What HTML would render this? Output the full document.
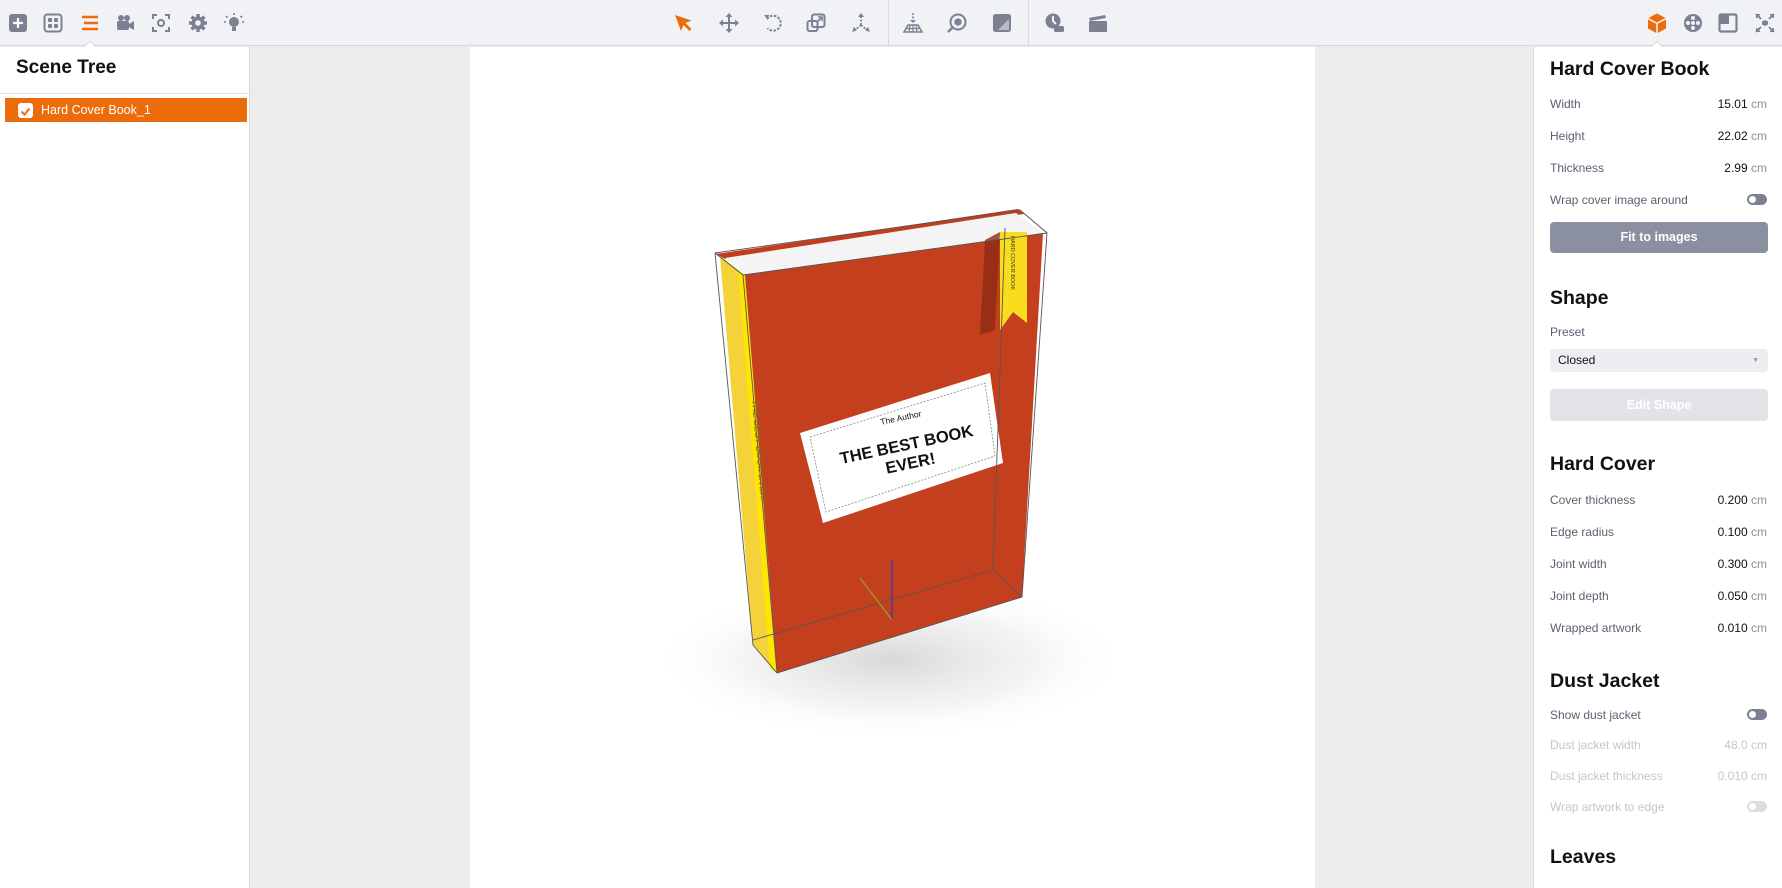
<!DOCTYPE html>
<html><head><meta charset="utf-8">
<style>
*{margin:0;padding:0;box-sizing:border-box}
body{width:1782px;height:888px;overflow:hidden;font-family:"Liberation Sans",sans-serif;background:#ececec;position:relative}
#tb{position:absolute;left:0;top:0;width:1782px;height:46px;background:#f1f2f5;border-bottom:1px solid #d6d8dc}
.ic{position:absolute;top:13px;width:20px;height:20px}
.sep{position:absolute;top:0;width:1px;height:46px;background:#d9dbdf}
#left{position:absolute;left:0;top:47px;width:250px;height:841px;background:#fff;border-right:1px solid #d9d9d9}
#left h2{position:absolute;left:16px;top:10px;font-size:19px;font-weight:bold;color:#111}
#left .div{position:absolute;left:0;top:46px;width:250px;height:1px;background:#e2e2e2}
#row{position:absolute;left:5px;top:51px;width:242px;height:24px;background:#ec6c0c;color:#fff;font-size:12.5px;line-height:24px;padding-left:36px}
#row .cb{position:absolute;left:13px;top:5px;width:15px;height:15px;background:#fff;border-radius:3px}
#view{position:absolute;left:470px;top:47px;width:845px;height:841px;background:#fff}
#right{position:absolute;left:1533px;top:47px;width:249px;height:841px;background:#fff;border-left:1px solid #d9d9d9}
.t{position:absolute;left:16px;font-size:19.5px;font-weight:bold;color:#111}
.l{position:absolute;left:16px;font-size:12px;color:#5b6170}
.v{position:absolute;right:15px;font-size:12px;color:#111}
.v span{color:#8a8f99}
.dis{color:#c4c6cc!important}
.dis span{color:#c4c6cc}
.tg{position:absolute;right:15px;width:20px;height:11px;border-radius:6px;background:#7b8192}
.tg::after{content:"";position:absolute;left:2px;top:2px;width:7px;height:7px;border-radius:50%;background:#fff}
.btn{position:absolute;left:16px;width:218px;border-radius:4px;text-align:center;color:#fff;font-weight:bold;font-size:12.5px}
</style></head><body>
<div id="tb">
<svg class="ic" style="left:8px" viewBox="0 0 20 20"><rect x="1" y="1" width="18" height="18" rx="3" fill="#7b8192"/><path d="M10 5v10M5 10h10" stroke="#fff" stroke-width="2.2"/></svg>
<svg class="ic" style="left:43px" viewBox="0 0 20 20"><rect x="1.5" y="1.5" width="17" height="17" rx="3" fill="none" stroke="#7b8192" stroke-width="2"/><rect x="5" y="5" width="4" height="4" rx="1" fill="#7b8192"/><rect x="11" y="5" width="4" height="4" rx="1" fill="#7b8192"/><rect x="5" y="11" width="4" height="4" rx="1" fill="#7b8192"/><rect x="11" y="11" width="4" height="4" rx="1" fill="#7b8192"/></svg>
<svg class="ic" style="left:80px" viewBox="0 0 20 20"><path d="M2 4h16M4 10h14M2 16h16" stroke="#ec6c0c" stroke-width="2.6"/></svg>
<svg style="position:absolute;left:84px;top:41px" width="12" height="6"><path d="M0 6L6 0L12 6" fill="#fff" stroke="#d6d8dc"/></svg>
<svg class="ic" style="left:115px" viewBox="0 0 20 20"><circle cx="6" cy="5" r="3" fill="#7b8192"/><circle cx="12" cy="5" r="3" fill="#7b8192"/><rect x="2" y="8" width="12" height="9" rx="2" fill="#7b8192"/><path d="M14 11l5-3v9l-5-3z" fill="#7b8192"/></svg>
<svg class="ic" style="left:151px" viewBox="0 0 20 20"><path d="M2 6V2h4M14 2h4v4M18 14v4h-4M6 18H2v-4" fill="none" stroke="#7b8192" stroke-width="2"/><circle cx="10" cy="10" r="3" fill="none" stroke="#7b8192" stroke-width="2"/></svg>
<svg class="ic" style="left:188px" viewBox="0 0 20 20"><circle cx="10" cy="10" r="6.5" fill="#7b8192"/><path d="M10 1v18M1 10h18M3.6 3.6l12.8 12.8M16.4 3.6L3.6 16.4" stroke="#7b8192" stroke-width="3.5"/><circle cx="10" cy="10" r="2.8" fill="#f1f2f5"/></svg>
<svg class="ic" style="left:224px" viewBox="0 0 20 20"><circle cx="10" cy="9" r="5" fill="#7b8192"/><rect x="8" y="14" width="4" height="4" fill="#7b8192"/><path d="M10 0v2M2 3l1.5 1.5M18 3l-1.5 1.5M0 9h2M18 9h2" stroke="#7b8192" stroke-width="1.6"/></svg>

<svg class="ic" style="left:673px" viewBox="0 0 20 20"><path d="M2 2l6 16 2.5-6 6 6 2-2-6-6 6-2.5z" fill="#ec6c0c"/></svg>
<svg class="ic" style="left:719px" viewBox="0 0 20 20"><path d="M10 1v18M1 10h18" stroke="#7b8192" stroke-width="2"/><path d="M10 0l-3.5 4h7zM10 20l-3.5-4h7zM0 10l4-3.5v7zM20 10l-4-3.5v7z" fill="#7b8192"/></svg>
<svg class="ic" style="left:763px" viewBox="0 0 20 20"><path d="M4 6A7.5 7.5 0 1 1 4.5 15" fill="none" stroke="#7b8192" stroke-width="2" stroke-dasharray="2.5 1.5"/><path d="M1 2l5 0-1 5z" fill="#7b8192"/></svg>
<svg class="ic" style="left:806px" viewBox="0 0 20 20"><rect x="1.5" y="8" width="10" height="10" rx="2" fill="none" stroke="#7b8192" stroke-width="2"/><rect x="6" y="1.5" width="12.5" height="12.5" rx="2" fill="none" stroke="#7b8192" stroke-width="2"/><path d="M11 9l5-5M12 4h4v4" stroke="#7b8192" stroke-width="1.6" fill="none"/></svg>
<svg class="ic" style="left:851px" viewBox="0 0 20 20"><path d="M10 3v9M10 12l-7 6M10 12l7 6" stroke="#7b8192" stroke-width="1.8" stroke-dasharray="2 1.5"/><path d="M10 0l-3 4h6zM1 19l2-5 3 3zM19 19l-2-5-3 3z" fill="#7b8192"/></svg>
<div class="sep" style="left:888px"></div>
<svg class="ic" style="left:903px" viewBox="0 0 20 20"><path d="M10 0v8" stroke="#7b8192" stroke-width="1.6" stroke-dasharray="2 1.5"/><path d="M7 7h6l-3 3z" fill="#7b8192"/><path d="M5 12h10l4 7H1z" fill="none" stroke="#7b8192" stroke-width="1.6"/><path d="M3 15.5h14M7 12l-1 7M13 12l1 7M10 12v7" stroke="#7b8192" stroke-width="1.2"/></svg>
<svg class="ic" style="left:947px" viewBox="0 0 20 20"><circle cx="11" cy="9" r="7.5" fill="none" stroke="#7b8192" stroke-width="2"/><path d="M5.5 14.5L1 19" stroke="#7b8192" stroke-width="2.4"/><path d="M11 5l3.5 2v4L11 13l-3.5-2V7z" fill="#7b8192"/></svg>
<svg class="ic" style="left:992px" viewBox="0 0 20 20"><rect x="1" y="1" width="18" height="18" rx="2.5" fill="#7b8192"/><path d="M6 17L17 6v11z" fill="#b8bcc6"/></svg>
<div class="sep" style="left:1028px"></div>
<svg class="ic" style="left:1045px" viewBox="0 0 20 20"><circle cx="8" cy="8" r="7.5" fill="#7b8192"/><path d="M8 3v5l3 3" stroke="#fff" stroke-width="1.8" fill="none"/><rect x="9" y="13" width="10" height="6" rx="1.5" fill="#7b8192"/></svg>
<svg class="ic" style="left:1088px" viewBox="0 0 20 20"><path d="M1 5l16-3 1 3-16 3z" fill="#7b8192"/><rect x="1" y="8" width="18" height="11" rx="1" fill="#7b8192"/></svg>

<svg class="ic" style="left:1647px" viewBox="0 0 20 20"><path d="M10 0.5l8.5 4.5L10 9.5 1.5 5z" fill="#ec6c0c"/><path d="M1 6.5l8.2 4.3V20L1 15.5z M19 6.5l-8.2 4.3V20l8.2-4.5z" fill="#ec6c0c"/></svg>
<svg style="position:absolute;left:1651px;top:41px" width="12" height="6"><path d="M0 6L6 0L12 6" fill="#fff" stroke="#d6d8dc"/></svg>
<svg class="ic" style="left:1683px" viewBox="0 0 20 20"><circle cx="10" cy="10" r="9" fill="#7b8192"/><circle cx="10" cy="5" r="2" fill="#f1f2f5"/><circle cx="10" cy="15" r="2" fill="#f1f2f5"/><circle cx="5" cy="10" r="2" fill="#f1f2f5"/><circle cx="15" cy="10" r="2" fill="#f1f2f5"/><circle cx="10" cy="10" r="2" fill="#f1f2f5"/></svg>
<svg class="ic" style="left:1718px" viewBox="0 0 20 20"><rect x="1.5" y="1.5" width="17" height="17" rx="1.5" fill="none" stroke="#7b8192" stroke-width="2.2"/><rect x="2" y="2" width="9" height="9" fill="#7b8192"/></svg>
<svg class="ic" style="left:1755px" viewBox="0 0 20 20"><path d="M1 1l5 5M19 1l-5 5M1 19l5-5M19 19l-5-5" stroke="#7b8192" stroke-width="1.8"/><path d="M1 1h4v1.5H2.5V5H1zM19 1h-4v1.5h2.5V5H19zM1 19h4v-1.5H2.5V15H1zM19 19h-4v-1.5h2.5V15H19z" fill="#7b8192"/><path d="M10 7l3 1.5v3L10 13l-3-1.5v-3z" fill="#7b8192"/></svg>
</div>

<div id="left">
<h2>Scene Tree</h2><div class="div"></div>
<div id="row"><div class="cb"><svg width="15" height="15"><path d="M3.5 7.5l3 3 5-6" stroke="#ec6c0c" stroke-width="2" fill="none"/></svg></div>Hard Cover Book_1</div>
</div>

<div id="view">
<svg width="845" height="841" viewBox="470 47 845 841" style="position:absolute;left:0;top:0">
<defs>
<radialGradient id="sh" cx="0.5" cy="0.5" r="0.5"><stop offset="0" stop-color="#d8d8d8"/><stop offset="0.6" stop-color="#ececec" stop-opacity="0.6"/><stop offset="1" stop-color="#fff" stop-opacity="0"/></radialGradient>
</defs>
<ellipse cx="890" cy="660" rx="240" ry="80" fill="url(#sh)"/>
<polygon points="716,254 1018,209 1024,214 725,259" fill="#c23d1f"/>
<polygon points="725,258 1016,213 1043,233 745,275" fill="#f4f4f4"/>
<polygon points="720,256 745,275 777,673 753,645" fill="#f6d23a"/>
<polygon points="738,270 745,275 777,673 770,668" fill="#ffe600"/>
<polygon points="745,275 1043,233 1022,597 777,673" fill="#c43f1e"/>
<polygon points="1000,232 985,240 980,335 995,330" fill="#8d2a14" opacity="0.8"/>
<polygon points="1000,232 1027,232 1027,323 1013,312 1000,330" fill="#f9dc1e"/>
<text transform="translate(1011,236) rotate(90)" font-size="5.5" fill="#333">HARD COVER BOOK</text>
<polygon points="800,433 990,373 1003,463 823,523" fill="#fff"/>
<polygon points="810,437 985,383 995,456 826,512" fill="none" stroke="#888" stroke-width="0.8" stroke-dasharray="2 1.5"/>
<g transform="rotate(-12 907 447)" text-anchor="middle" font-weight="bold" fill="#111">
<text x="907" y="420" font-size="8.5" font-weight="normal">The Author</text>
<text x="907" y="450" font-size="16.5">THE BEST BOOK</text>
<text x="907" y="469" font-size="16.5">EVER!</text>
</g>
<text transform="translate(752,400) rotate(85)" font-size="9" fill="#8a6a10" font-style="italic">THE BEST BOOK EVER!</text>
<g fill="none" stroke="#555" stroke-width="0.9">
<polyline points="715,253 1020,210 1047,233 1022,597 777,673 753,645 715,253"/>
<polyline points="715,253 743,275 1047,233"/>
<line x1="743" y1="275" x2="777" y2="673"/>
<line x1="753" y1="640" x2="993" y2="570"/>
<line x1="993" y1="570" x2="1022" y2="597"/>
<line x1="1005" y1="228" x2="993" y2="570"/>
</g>
<line x1="892" y1="560" x2="892" y2="620" stroke="#3333cc" stroke-width="1.2"/>
<line x1="860" y1="578" x2="892" y2="620" stroke="#88bb22" stroke-width="1"/>
<line x1="892" y1="620" x2="953" y2="601" stroke="#dd3333" stroke-width="1"/>
</svg>
</div>

<div id="right">
<div class="t" style="top:11px">Hard Cover Book</div>
<div class="l" style="top:50px">Width</div><div class="v" style="top:50px">15.01 <span>cm</span></div>
<div class="l" style="top:82px">Height</div><div class="v" style="top:82px">22.02 <span>cm</span></div>
<div class="l" style="top:114px">Thickness</div><div class="v" style="top:114px">2.99 <span>cm</span></div>
<div class="l" style="top:146px">Wrap cover image around</div><div class="tg" style="top:147px"></div>
<div class="btn" style="top:175px;height:31px;line-height:31px;background:#8a909f">Fit to images</div>
<div class="t" style="top:240px">Shape</div>
<div class="l" style="top:278px">Preset</div>
<div style="position:absolute;left:16px;top:302px;width:218px;height:23px;background:#eceef2;border-radius:4px;font-size:12px;line-height:23px;padding-left:8px;color:#111">Closed<span style="position:absolute;right:9px;top:0;font-size:7px;color:#999">▼</span></div>
<div class="btn" style="top:342px;height:32px;line-height:32px;background:#e2e3e7">Edit Shape</div>
<div class="t" style="top:406px">Hard Cover</div>
<div class="l" style="top:446px">Cover thickness</div><div class="v" style="top:446px">0.200 <span>cm</span></div>
<div class="l" style="top:478px">Edge radius</div><div class="v" style="top:478px">0.100 <span>cm</span></div>
<div class="l" style="top:510px">Joint width</div><div class="v" style="top:510px">0.300 <span>cm</span></div>
<div class="l" style="top:542px">Joint depth</div><div class="v" style="top:542px">0.050 <span>cm</span></div>
<div class="l" style="top:574px">Wrapped artwork</div><div class="v" style="top:574px">0.010 <span>cm</span></div>
<div class="t" style="top:623px">Dust Jacket</div>
<div class="l" style="top:661px">Show dust jacket</div><div class="tg" style="top:662px"></div>
<div class="l dis" style="top:691px">Dust jacket width</div><div class="v dis" style="top:691px">48.0 <span>cm</span></div>
<div class="l dis" style="top:722px">Dust jacket thickness</div><div class="v dis" style="top:722px">0.010 <span>cm</span></div>
<div class="l dis" style="top:753px">Wrap artwork to edge</div><div class="tg" style="top:754px;background:#dcdde1"></div>
<div class="t" style="top:799px">Leaves</div>
</div>
</body></html>
